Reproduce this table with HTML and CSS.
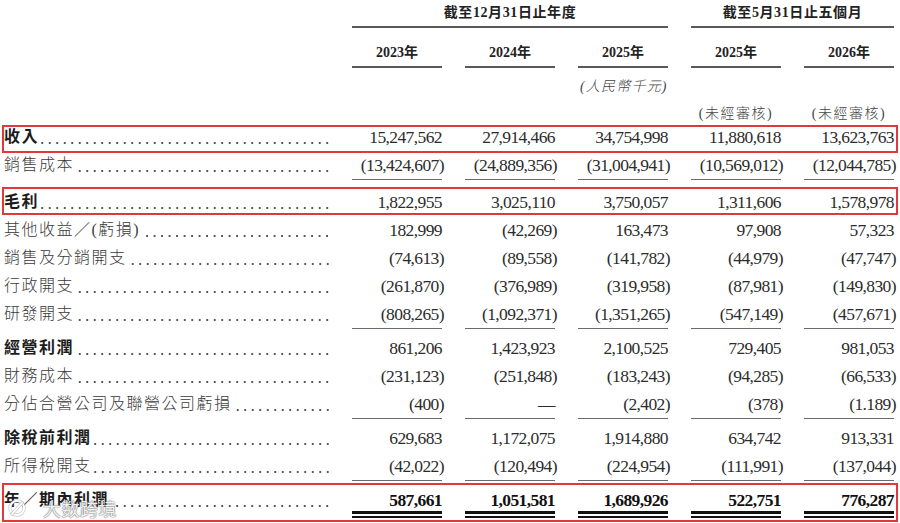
FILE: index.html
```html
<!DOCTYPE html>
<html lang="zh-Hant">
<head>
<meta charset="utf-8">
<title>綜合損益表</title>
<link rel="stylesheet" href="styles.css">
</head>
<body>
<div class="sheet">
  <div class="row head-group">
    <div></div>
    <div class="grp g1">截至12月31日止年度</div>
    <div class="grp g2">截至5月31日止五個月</div>
  </div>
  <div class="row head-years">
    <div></div>
    <div class="yr">2023年</div>
    <div class="yr">2024年</div>
    <div class="yr">2025年</div>
    <div class="yr">2025年</div>
    <div class="yr">2026年</div>
  </div>
  <div class="row head-unit">
    <div class="unit">(人民幣千元)</div>
  </div>
  <div class="row head-audit">
    <div class="audit a4">(未經審核)</div>
    <div class="audit a5">(未經審核)</div>
  </div>

  <div class="row line box box1">
    <div class="lab b"><span class="t">收入</span><span class="dots"></span></div>
    <div class="num">15,247,562</div>
    <div class="num">27,914,466</div>
    <div class="num">34,754,998</div>
    <div class="num">11,880,618</div>
    <div class="num">13,623,763</div>
  </div>
  <div class="row line ul">
    <div class="lab"><span class="t">銷售成本</span><span class="dots"></span></div>
    <div class="num"><span class="p">(13,424,607)</span></div>
    <div class="num"><span class="p">(24,889,356)</span></div>
    <div class="num"><span class="p">(31,004,941)</span></div>
    <div class="num"><span class="p">(10,569,012)</span></div>
    <div class="num"><span class="p">(12,044,785)</span></div>
  </div>
  <div class="row line box box2 after-ul-wide">
    <div class="lab b"><span class="t">毛利</span><span class="dots"></span></div>
    <div class="num">1,822,955</div>
    <div class="num">3,025,110</div>
    <div class="num">3,750,057</div>
    <div class="num">1,311,606</div>
    <div class="num">1,578,978</div>
  </div>
  <div class="row line">
    <div class="lab"><span class="t">其他收益／(虧損)</span><span class="dots"></span></div>
    <div class="num">182,999</div>
    <div class="num"><span class="p">(42,269)</span></div>
    <div class="num">163,473</div>
    <div class="num">97,908</div>
    <div class="num">57,323</div>
  </div>
  <div class="row line">
    <div class="lab"><span class="t">銷售及分銷開支</span><span class="dots"></span></div>
    <div class="num"><span class="p">(74,613)</span></div>
    <div class="num"><span class="p">(89,558)</span></div>
    <div class="num"><span class="p">(141,782)</span></div>
    <div class="num"><span class="p">(44,979)</span></div>
    <div class="num"><span class="p">(47,747)</span></div>
  </div>
  <div class="row line">
    <div class="lab"><span class="t">行政開支</span><span class="dots"></span></div>
    <div class="num"><span class="p">(261,870)</span></div>
    <div class="num"><span class="p">(376,989)</span></div>
    <div class="num"><span class="p">(319,958)</span></div>
    <div class="num"><span class="p">(87,981)</span></div>
    <div class="num"><span class="p">(149,830)</span></div>
  </div>
  <div class="row line ul">
    <div class="lab"><span class="t">研發開支</span><span class="dots"></span></div>
    <div class="num"><span class="p">(808,265)</span></div>
    <div class="num"><span class="p">(1,092,371)</span></div>
    <div class="num"><span class="p">(1,351,265)</span></div>
    <div class="num"><span class="p">(547,149)</span></div>
    <div class="num"><span class="p">(457,671)</span></div>
  </div>
  <div class="row line">
    <div class="lab b"><span class="t">經營利潤</span><span class="dots"></span></div>
    <div class="num">861,206</div>
    <div class="num">1,423,923</div>
    <div class="num">2,100,525</div>
    <div class="num">729,405</div>
    <div class="num">981,053</div>
  </div>
  <div class="row line">
    <div class="lab"><span class="t">財務成本</span><span class="dots"></span></div>
    <div class="num"><span class="p">(231,123)</span></div>
    <div class="num"><span class="p">(251,848)</span></div>
    <div class="num"><span class="p">(183,243)</span></div>
    <div class="num"><span class="p">(94,285)</span></div>
    <div class="num"><span class="p">(66,533)</span></div>
  </div>
  <div class="row line ul">
    <div class="lab"><span class="t">分佔合營公司及聯營公司虧損</span><span class="dots"></span></div>
    <div class="num"><span class="p">(400)</span></div>
    <div class="num">—</div>
    <div class="num"><span class="p">(2,402)</span></div>
    <div class="num"><span class="p">(378)</span></div>
    <div class="num"><span class="p">(1.189)</span></div>
  </div>
  <div class="row line">
    <div class="lab b"><span class="t">除稅前利潤</span><span class="dots"></span></div>
    <div class="num">629,683</div>
    <div class="num">1,172,075</div>
    <div class="num">1,914,880</div>
    <div class="num">634,742</div>
    <div class="num">913,331</div>
  </div>
  <div class="row line ul">
    <div class="lab"><span class="t">所得稅開支</span><span class="dots"></span></div>
    <div class="num"><span class="p">(42,022)</span></div>
    <div class="num"><span class="p">(120,494)</span></div>
    <div class="num"><span class="p">(224,954)</span></div>
    <div class="num"><span class="p">(111,991)</span></div>
    <div class="num"><span class="p">(137,044)</span></div>
  </div>
  <div class="row line total box box3">
    <div class="lab b"><span class="t">年／期內利潤</span><span class="dots"></span></div>
    <div class="num">587,661</div>
    <div class="num">1,051,581</div>
    <div class="num">1,689,926</div>
    <div class="num">522,751</div>
    <div class="num">776,287</div>
    <div class="watermark">
      <svg class="wm-logo" width="18" height="20" viewBox="0 0 18 20" aria-hidden="true">
        <circle cx="9" cy="10" r="7" fill="none" stroke="#9a9a9a" stroke-width="3.4" opacity="0.55"/>
        <circle cx="9" cy="10" r="7" fill="none" stroke="#ffffff" stroke-width="2"/>
        <path d="M4 16 L14 5" stroke="#9a9a9a" stroke-width="3.2" opacity="0.55" stroke-linecap="round"/>
        <path d="M4 16 L14 5" stroke="#ffffff" stroke-width="1.8" stroke-linecap="round"/>
      </svg>
      <span class="wm-text">大数跨境</span>
    </div>
  </div>
</div>
</body>
</html>
```

FILE: styles.css
```css
html, body {
  margin: 0;
  padding: 0;
  background: #ffffff;
}

body {
  width: 900px;
  height: 523px;
  overflow: hidden;
  font-family: "Liberation Serif", "Noto Sans CJK TC", serif;
  color: #2e2e2e;
}

.sheet {
  width: 900px;
}

.row {
  display: grid;
  grid-template-columns: 325px repeat(5, 90px);
  column-gap: 23px;
  padding-left: 4px;
}

/* ---------- header ---------- */
.head-group {
  height: 28px;
}

.grp {
  box-sizing: border-box;
  height: 28px;
  line-height: 26px;
  border-bottom: 2px solid #5a5a5a;
  text-align: center;
  font-size: 14px;
  font-weight: 700;
  color: #222;
  letter-spacing: 0.6px;
}

.g1 { grid-column: 2 / 5; }
.g2 { grid-column: 5 / 7; }

.yr {
  box-sizing: border-box;
  height: 40px;
  padding-top: 16px;
  line-height: 18px;
  border-bottom: 2px solid #5a5a5a;
  text-align: center;
  font-size: 14px;
  font-weight: 700;
  color: #222;
}

.unit {
  grid-column: 4;
  padding-top: 10px;
  padding-left: 2px;
  line-height: 18px;
  height: 28px;
  box-sizing: border-box;
  white-space: nowrap;
  font-size: 14px;
  font-style: italic;
  letter-spacing: 1.2px;
  color: #444;
  font-weight: 300;
}

.head-audit {
  height: 27px;
}

.audit {
  padding-top: 9px;
  line-height: 18px;
  text-align: center;
  white-space: nowrap;
  font-size: 14px;
  letter-spacing: 1.5px;
  color: #444;
  font-weight: 300;
}

.a4 { grid-column: 5; }
.a5 { grid-column: 6; }

/* ---------- body rows ---------- */
.line {
  position: relative;
  line-height: 28px;
}

.lab {
  display: flex;
  height: 28px;
  font-size: 16px;
  letter-spacing: 1.5px;
  color: #3a3a3a;
  font-weight: 300;
  white-space: nowrap;
}

.lab.b {
  font-weight: 700;
  color: #1c1c1c;
}

.t {
  flex: none;
}

.dots {
  flex: 1;
  margin-left: 2px;
  margin-right: -2px;
  background-image: radial-gradient(circle, #555 0.85px, transparent 1.25px);
  background-size: 7.5px 4px;
  background-repeat: repeat-x;
  background-position: right 0 top 18px;
}

.num {
  height: 28px;
  text-align: right;
  font-size: 17.5px;
  letter-spacing: -0.6px;
  color: #2c2c2c;
  white-space: nowrap;
}

.p {
  margin-right: -2px;
}

.ul .num {
  box-sizing: border-box;
  height: 28.5px;
  border-bottom: 1.5px solid #6a6a6a;
}

.ul + .line {
  margin-top: 5.5px;
}

.ul + .after-ul-wide {
  margin-top: 8.5px;
}

/* total row */
.total .num {
  height: 33px;
  font-weight: 700;
  color: #111;
  background:
    linear-gradient(#111, #111) 0 25px / 100% 3px no-repeat,
    linear-gradient(#111, #111) 0 30px / 100% 2px no-repeat;
}

/* ---------- red highlight boxes (annotation overlay) ---------- */
.box::after {
  content: "";
  position: absolute;
  left: 2px;
  right: 2px;
  border: 2.5px solid #e2373d;
  pointer-events: none;
}

.box1::after { top: 2px; bottom: -2px; }
.box2::after { top: -1px; bottom: 1px; }
.box3::after { top: -3px; bottom: -3px; }

/* ---------- watermark overlay ---------- */
.watermark {
  position: absolute;
  left: 8px;
  top: 12px;
  display: flex;
  align-items: center;
  gap: 17px;
  pointer-events: none;
}

.wm-logo {
  display: block;
}

.wm-text {
  font-family: "Noto Sans CJK SC", sans-serif;
  font-size: 18px;
  line-height: 20px;
  color: rgba(255, 255, 255, 0.92);
  letter-spacing: 0.5px;
  text-shadow:
    0 0 1px rgba(110, 110, 110, 0.9),
    0 0 1px rgba(110, 110, 110, 0.9),
    0 0 2px rgba(140, 140, 140, 0.6);
}
```
